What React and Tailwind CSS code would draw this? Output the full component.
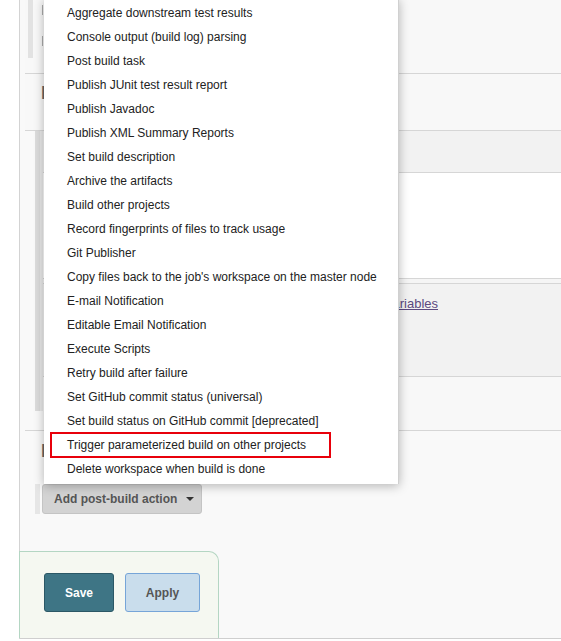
import React from "react";

const items = [
  "Aggregate downstream test results",
  "Console output (build log) parsing",
  "Post build task",
  "Publish JUnit test result report",
  "Publish Javadoc",
  "Publish XML Summary Reports",
  "Set build description",
  "Archive the artifacts",
  "Build other projects",
  "Record fingerprints of files to track usage",
  "Git Publisher",
  "Copy files back to the job's workspace on the master node",
  "E-mail Notification",
  "Editable Email Notification",
  "Execute Scripts",
  "Retry build after failure",
  "Set GitHub commit status (universal)",
  "Set build status on GitHub commit [deprecated]",
  "Trigger parameterized build on other projects",
  "Delete workspace when build is done",
];

export default function App() {
  return (
    <div className="relative w-[561px] h-[641px] bg-white overflow-hidden font-['Liberation_Sans',Arial,sans-serif] text-[#333]">
      <div className="flex h-[639px]">
        <div className="w-[20px] shrink-0 bg-white border-r border-[#d3d3d3]" />
        <div className="flex-1 flex flex-col bg-[#f9f9f9] border-b border-[#cfcfcf]">
          <div className="ml-[5px] flex flex-col">
            {/* row 1 */}
            <div className="h-[74px] bg-[#f8f8f8] border-b border-[#d6d6d6] flex">
              <div className="ml-[3px] w-[5px] h-[58px] bg-[#e2e2e2]" />
              <div className="ml-[9px] flex flex-col">
                <div className="mt-[5px] h-[10px] border-l border-[#aaa]" />
                <div className="mt-[21px] h-[10px] border-l border-[#aaa]" />
              </div>
            </div>
            {/* row 2 */}
            <div className="h-[57px] bg-[#f8f8f8] border-b border-[#d6d6d6] pl-[16px] pt-[9px]">
              <div className="text-[19px] leading-[19px] font-bold text-[#666]">Build Environment</div>
            </div>
            {/* nested rows */}
            <div className="flex">
              <div className="ml-[10px] flex self-start">
                <div className="w-[5px] h-[280px] bg-[#dcdcdc]" />
                <div className="w-[3px] h-[280px] bg-[#e8e8e8]" />
              </div>
              <div className="flex-1 flex flex-col">
                <div className="h-[42px] bg-[#f2f2f2] border-b border-[#d6d6d6]" />
                <div className="h-[106px] bg-white border-b border-[#d6d6d6]" />
                <div className="h-[5px] bg-[#f5f5f5] border-b border-[#d6d6d6]" />
                <div className="h-[93px] bg-[#f2f2f2] border-b border-[#d6d6d6] pt-[7px] pl-[343px]">
                  <a className="text-[13px] leading-[15px] underline text-[#5c4a80] whitespace-nowrap">variables</a>
                </div>
                <div className="h-[53px] bg-[#f8f8f8]" />
              </div>
            </div>
            <div className="h-px bg-[#d6d6d6]" />
            {/* post build */}
            <div className="pl-[16px] pt-[10px]">
              <div className="text-[19px] leading-[19px] font-bold text-[#666]">Post-build Actions</div>
            </div>
            <div className="mt-[24px] flex items-stretch pl-[10px]">
              <div className="w-[5px] h-[30px] bg-[#e6e6e6]" />
              <button className="ml-[2px] h-[30px] w-[160px] rounded-[3px] bg-[#d3d3d3] border border-[#c4c4c4] flex items-center pl-[11px] text-[12px] font-bold text-[#555]">
                Add post-build action
                <span className="ml-[9px] w-0 h-0 border-l-[4px] border-r-[4px] border-t-[4px] border-l-transparent border-r-transparent border-t-[#333]" />
              </button>
            </div>
          </div>
          <div className="mt-auto w-[200px] h-[87px] bg-[#f5f8f1] border-t border-l border-r border-[#b4d6c3] rounded-tr-[10px] -ml-px pl-[24px] pt-[21px] flex gap-[11px]">
            <button className="w-[70px] h-[39px] rounded-[3px] bg-[#3e7585] border border-[#2b5866] text-white text-[12px] font-bold">Save</button>
            <button className="w-[75px] h-[39px] rounded-[3px] bg-[#c9ddec] border border-[#76a5d8] text-[#555] text-[12px] font-bold">Apply</button>
          </div>
        </div>
      </div>

      {/* dropdown menu overlay */}
      <div className="absolute left-[44px] top-[-2px] w-[355px] bg-white py-[3px] shadow-[0_2px_10px_rgba(0,0,0,0.28)] border-r border-[#d0d0d0]">
        {items.map((t) => (
          <div key={t} className="h-[24px] flex items-center pl-[23px] text-[12px] text-[#222] whitespace-nowrap">
            {t}
          </div>
        ))}
      </div>
      <div className="absolute left-[50px] top-[432px] w-[281px] h-[26px] border-2 border-[#e8000b]" />
    </div>
  );
}
